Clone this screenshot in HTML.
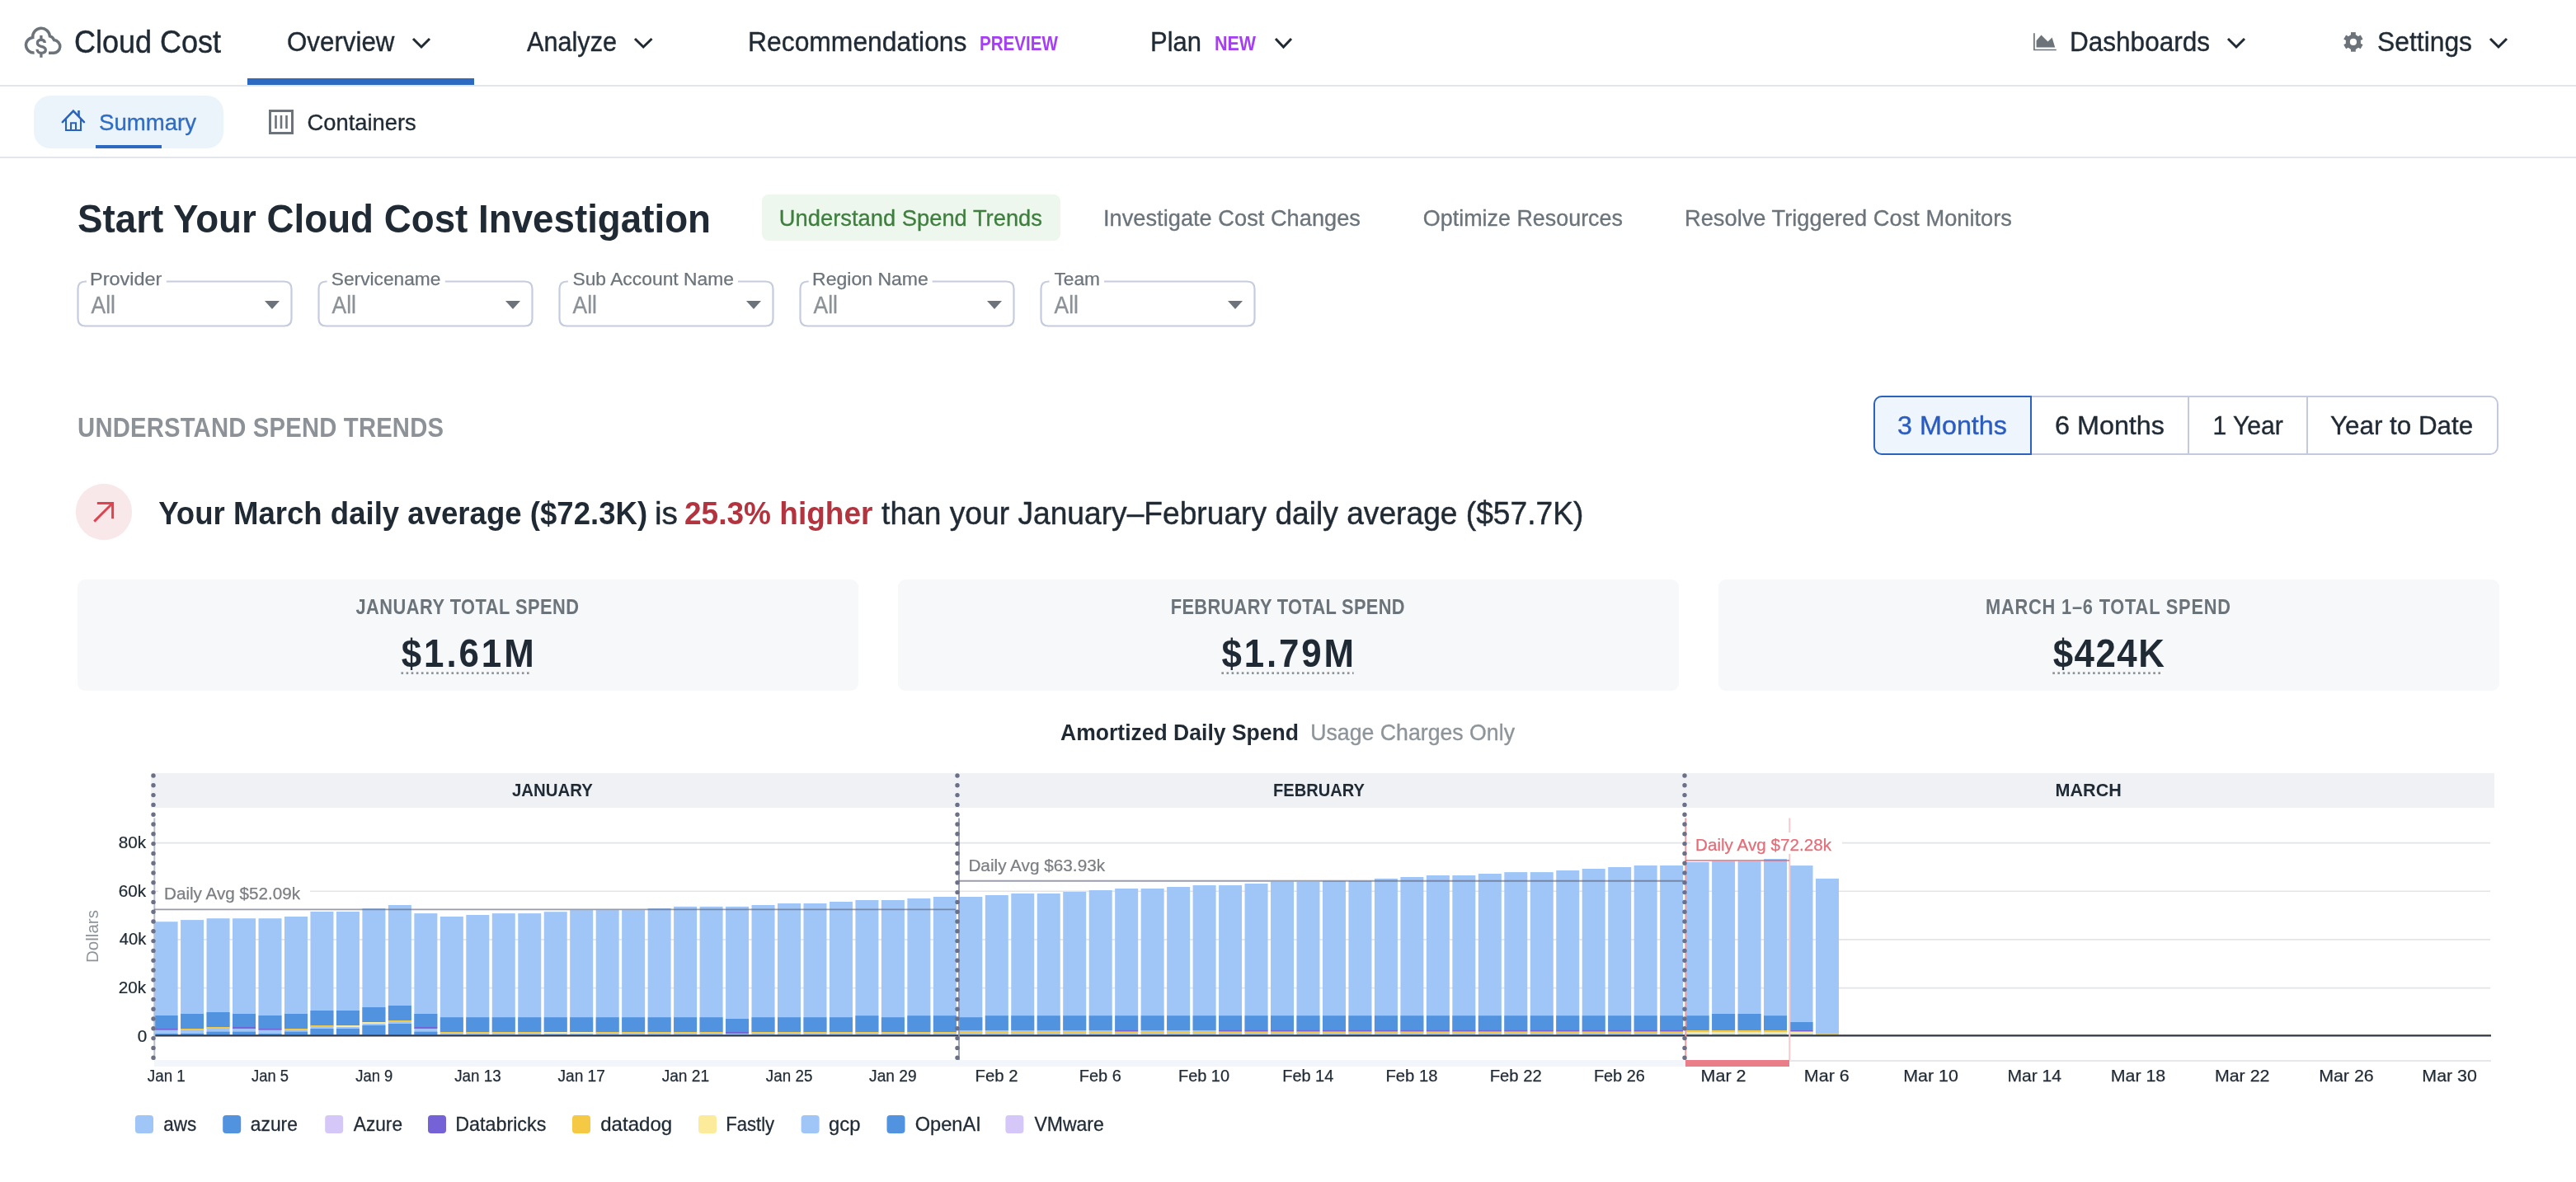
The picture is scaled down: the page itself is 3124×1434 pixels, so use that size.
<!DOCTYPE html>
<html><head><meta charset="utf-8"><title>Cloud Cost</title>
<style>
html,body{margin:0;padding:0;background:#fff;}
body{width:3124px;height:1434px;position:relative;overflow:hidden;font-family:"Liberation Sans", sans-serif;}
svg{position:absolute;left:0;top:0;will-change:transform;}
text{font-family:"Liberation Sans", sans-serif;}
</style></head><body>
<div style="position:absolute;left:0px;top:103px;width:3124px;height:2px;background:#e2e6ec"></div>
<div style="position:absolute;left:300px;top:95px;width:275px;height:8px;background:#2d69c0"></div>
<div style="position:absolute;left:0px;top:190px;width:3124px;height:2px;background:#e2e6ec"></div>
<div style="position:absolute;left:41px;top:116px;width:230px;height:64px;background:#ecf4fb;border-radius:20px"></div>
<div style="position:absolute;left:116px;top:176px;width:80px;height:4px;background:#2d69c0"></div>
<div style="position:absolute;left:924px;top:236px;width:362px;height:56px;background:#edf7ee;border-radius:8px"></div>
<div style="position:absolute;left:2272px;top:480px;width:758px;height:72px;border:2px solid #c3c9df;border-radius:10px;box-sizing:border-box"></div>
<div style="position:absolute;left:2272px;top:480px;width:192px;height:72px;border:2.5px solid #2a62be;border-radius:10px 0 0 10px;background:#eef5fc;box-sizing:border-box"></div>
<div style="position:absolute;left:2653px;top:482px;width:2px;height:68px;background:#c3c9df"></div>
<div style="position:absolute;left:2797px;top:482px;width:2px;height:68px;background:#c3c9df"></div>
<div style="position:absolute;left:94px;top:703px;width:947px;height:135px;background:#f7f8fa;border-radius:9px"></div>
<div style="position:absolute;left:1089px;top:703px;width:947px;height:135px;background:#f7f8fa;border-radius:9px"></div>
<div style="position:absolute;left:2084px;top:703px;width:947px;height:135px;background:#f7f8fa;border-radius:9px"></div>
<svg width="3124" height="1434" viewBox="0 0 3124 1434">
<g fill="none" stroke="#6c737a" stroke-width="3.5"><path d="M41.6,64 A9.3,9.3 0 0,1 39.7,45.5 A10.2,10.2 0 0,1 60.4,43.9 A8,8 0 0,1 65.6,48.6 A7.8,7.8 0 0,1 64.3,64.2 L59,64.2"/></g>
<g fill="none" stroke="#6c737a" stroke-width="3.3"><path d="M54.3,52 C54.3,49.6 52.3,48.4 49.9,48.4 C47.2,48.4 45.4,49.9 45.4,52.3 C45.4,54.8 47.6,55.8 50,56.3 C53,56.9 55.3,58 55.3,60.6 C55.3,63 53.2,64.4 50.2,64.4 C47,64.4 45,62.5 45,59.7"/><line x1="49.9" y1="42.9" x2="49.9" y2="48.4"/><line x1="49.9" y1="64.4" x2="49.9" y2="69.8"/></g>
<text x="90.10" y="63.9" font-size="38.0" fill="#1f2a35" font-weight="normal" stroke="#1f2a35" stroke-width="0.46" textLength="177.90" lengthAdjust="spacingAndGlyphs">Cloud Cost</text>
<text x="348.00" y="62.4" font-size="32.8" fill="#1f2a35" font-weight="normal" stroke="#1f2a35" stroke-width="0.39" textLength="130.40" lengthAdjust="spacingAndGlyphs">Overview</text>
<polyline points="501.0,47.0 511.0,57.0 521.0,47.0" fill="none" stroke="#1f2a35" stroke-width="3" stroke-linecap="butt" stroke-linejoin="miter"/>
<text x="639.00" y="62.4" font-size="32.8" fill="#1f2a35" font-weight="normal" stroke="#1f2a35" stroke-width="0.39" textLength="109.00" lengthAdjust="spacingAndGlyphs">Analyze</text>
<polyline points="770.0,47.0 780.2,57.0 790.5,47.0" fill="none" stroke="#1f2a35" stroke-width="3" stroke-linecap="butt" stroke-linejoin="miter"/>
<text x="907.00" y="62.4" font-size="32.8" fill="#1f2a35" font-weight="normal" stroke="#1f2a35" stroke-width="0.39" textLength="265.50" lengthAdjust="spacingAndGlyphs">Recommendations</text>
<text x="1188.00" y="60.5" font-size="24.2" fill="#a43ff2" font-weight="bold" textLength="95.00" lengthAdjust="spacingAndGlyphs">PREVIEW</text>
<text x="1395.00" y="62.4" font-size="32.8" fill="#1f2a35" font-weight="normal" stroke="#1f2a35" stroke-width="0.39" textLength="62.00" lengthAdjust="spacingAndGlyphs">Plan</text>
<text x="1473.00" y="60.5" font-size="24.2" fill="#a43ff2" font-weight="bold" textLength="50.00" lengthAdjust="spacingAndGlyphs">NEW</text>
<polyline points="1547.0,47.0 1556.5,57.0 1566.0,47.0" fill="none" stroke="#1f2a35" stroke-width="3" stroke-linecap="butt" stroke-linejoin="miter"/>
<path d="M2466.9,40.3 L2466.9,60.5 L2493.8,60.5" fill="none" stroke="#6c737a" stroke-width="1.7"/>
<path d="M2469.6,57.6 L2469.6,49.2 L2475.5,42.6 L2483.5,50.5 L2488.6,45.6 L2492.2,57.6 Z" fill="#6c737a"/>
<text x="2510.00" y="62.4" font-size="32.8" fill="#1f2a35" font-weight="normal" stroke="#1f2a35" stroke-width="0.39" textLength="170.00" lengthAdjust="spacingAndGlyphs">Dashboards</text>
<polyline points="2702.0,47.0 2712.0,57.0 2722.0,47.0" fill="none" stroke="#1f2a35" stroke-width="3" stroke-linecap="butt" stroke-linejoin="miter"/>
<g fill="#6c737a"><circle cx="2853.9" cy="50.9" r="9.2"/><rect x="2851.00" y="39.10" width="5.8" height="6" transform="rotate(120,2853.9,50.9)"/><rect x="2851.00" y="39.10" width="5.8" height="6" transform="rotate(180,2853.9,50.9)"/><rect x="2851.00" y="39.10" width="5.8" height="6" transform="rotate(240,2853.9,50.9)"/><rect x="2851.00" y="39.10" width="5.8" height="6" transform="rotate(300,2853.9,50.9)"/><rect x="2851.00" y="39.10" width="5.8" height="6" transform="rotate(360,2853.9,50.9)"/><rect x="2851.00" y="39.10" width="5.8" height="6" transform="rotate(420,2853.9,50.9)"/></g><circle cx="2853.9" cy="50.9" r="4.1" fill="#ffffff"/>
<text x="2883.10" y="62.4" font-size="32.8" fill="#1f2a35" font-weight="normal" stroke="#1f2a35" stroke-width="0.39" textLength="114.90" lengthAdjust="spacingAndGlyphs">Settings</text>
<polyline points="3020.0,47.0 3030.0,57.0 3040.0,47.0" fill="none" stroke="#1f2a35" stroke-width="3" stroke-linecap="butt" stroke-linejoin="miter"/>
<g fill="none" stroke="#2a63bd" stroke-width="2.5" stroke-linecap="round"><path d="M75.8,148.2 L88.9,134.6 L102,148.2"/></g><g fill="none" stroke="#2a63bd" stroke-width="2.1"><path d="M80,143.5 L80,158 L98,158 L98,143.5"/><path d="M86,158 L86,149.3 L92,149.3 L92,158"/></g><path d="M94.2,134 L96.8,134 L96.8,142.5 L94.2,140 Z" fill="#2a63bd"/>
<text x="120.00" y="157.8" font-size="27.5" fill="#2f6cc3" font-weight="normal" stroke="#2f6cc3" stroke-width="0.33" textLength="118.10" lengthAdjust="spacingAndGlyphs">Summary</text>
<rect x="327.5" y="134.5" width="27" height="27" fill="none" stroke="#6c737a" stroke-width="3"/>
<line x1="334.5" y1="140" x2="334.5" y2="156" stroke="#6c737a" stroke-width="2.6"/>
<line x1="341" y1="140" x2="341" y2="156" stroke="#6c737a" stroke-width="2.6"/>
<line x1="347.5" y1="140" x2="347.5" y2="156" stroke="#6c737a" stroke-width="2.6"/>
<text x="372.50" y="157.8" font-size="27.5" fill="#1f2a35" font-weight="normal" stroke="#1f2a35" stroke-width="0.33" textLength="132.30" lengthAdjust="spacingAndGlyphs">Containers</text>
<text x="94.00" y="282.0" font-size="48.4" fill="#1f2a35" font-weight="bold" textLength="768.00" lengthAdjust="spacingAndGlyphs">Start Your Cloud Cost Investigation</text>
<text x="944.80" y="274.0" font-size="27.5" fill="#3e7f3e" font-weight="normal" stroke="#3e7f3e" stroke-width="0.33" textLength="319.20" lengthAdjust="spacingAndGlyphs">Understand Spend Trends</text>
<text x="1338.00" y="274.0" font-size="27.5" fill="#6b747b" font-weight="normal" stroke="#6b747b" stroke-width="0.33" textLength="312.00" lengthAdjust="spacingAndGlyphs">Investigate Cost Changes</text>
<text x="1725.80" y="274.0" font-size="27.5" fill="#6b747b" font-weight="normal" stroke="#6b747b" stroke-width="0.33" textLength="242.20" lengthAdjust="spacingAndGlyphs">Optimize Resources</text>
<text x="2043.00" y="274.0" font-size="27.5" fill="#6b747b" font-weight="normal" stroke="#6b747b" stroke-width="0.33" textLength="397.00" lengthAdjust="spacingAndGlyphs">Resolve Triggered Cost Monitors</text>
<path d="M105.0,341.5 L103.5,341.5 Q94.5,341.5 94.5,350.5 L94.5,386.5 Q94.5,395.5 103.5,395.5 L344.5,395.5 Q353.5,395.5 353.5,386.5 L353.5,350.5 Q353.5,341.5 344.5,341.5 L201.8,341.5" fill="none" stroke="#c5cbe0" stroke-width="2.2"/>
<text x="109.00" y="346.4" font-size="21.2" fill="#6b737b" font-weight="normal" stroke="#6b737b" stroke-width="0.25" textLength="87.40" lengthAdjust="spacingAndGlyphs">Provider</text>
<text x="110.50" y="380.2" font-size="28.7" fill="#8b9197" font-weight="normal" stroke="#8b9197" stroke-width="0.34" textLength="29.40" lengthAdjust="spacingAndGlyphs">All</text>
<path d="M321.0,365 L339.0,365 L330.0,375 Z" fill="#6c737a"/>
<path d="M396.6,341.5 L395.5,341.5 Q386.5,341.5 386.5,350.5 L386.5,386.5 Q386.5,395.5 395.5,395.5 L636.5,395.5 Q645.5,395.5 645.5,386.5 L645.5,350.5 Q645.5,341.5 636.5,341.5 L539.8,341.5" fill="none" stroke="#c5cbe0" stroke-width="2.2"/>
<text x="401.80" y="346.4" font-size="21.2" fill="#6b737b" font-weight="normal" stroke="#6b737b" stroke-width="0.25" textLength="132.60" lengthAdjust="spacingAndGlyphs">Servicename</text>
<text x="402.50" y="380.2" font-size="28.7" fill="#8b9197" font-weight="normal" stroke="#8b9197" stroke-width="0.34" textLength="29.40" lengthAdjust="spacingAndGlyphs">All</text>
<path d="M613.0,365 L631.0,365 L622.0,375 Z" fill="#6c737a"/>
<path d="M688.8,341.5 L687.5,341.5 Q678.5,341.5 678.5,350.5 L678.5,386.5 Q678.5,395.5 687.5,395.5 L928.5,395.5 Q937.5,395.5 937.5,386.5 L937.5,350.5 Q937.5,341.5 928.5,341.5 L895.0,341.5" fill="none" stroke="#c5cbe0" stroke-width="2.2"/>
<text x="694.40" y="346.4" font-size="21.2" fill="#6b737b" font-weight="normal" stroke="#6b737b" stroke-width="0.25" textLength="195.60" lengthAdjust="spacingAndGlyphs">Sub Account Name</text>
<text x="694.50" y="380.2" font-size="28.7" fill="#8b9197" font-weight="normal" stroke="#8b9197" stroke-width="0.34" textLength="29.40" lengthAdjust="spacingAndGlyphs">All</text>
<path d="M905.0,365 L923.0,365 L914.0,375 Z" fill="#6c737a"/>
<path d="M980.7,341.5 L979.5,341.5 Q970.5,341.5 970.5,350.5 L970.5,386.5 Q970.5,395.5 979.5,395.5 L1220.5,395.5 Q1229.5,395.5 1229.5,386.5 L1229.5,350.5 Q1229.5,341.5 1220.5,341.5 L1130.6,341.5" fill="none" stroke="#c5cbe0" stroke-width="2.2"/>
<text x="985.10" y="346.4" font-size="21.2" fill="#6b737b" font-weight="normal" stroke="#6b737b" stroke-width="0.25" textLength="140.70" lengthAdjust="spacingAndGlyphs">Region Name</text>
<text x="986.50" y="380.2" font-size="28.7" fill="#8b9197" font-weight="normal" stroke="#8b9197" stroke-width="0.34" textLength="29.40" lengthAdjust="spacingAndGlyphs">All</text>
<path d="M1197.0,365 L1215.0,365 L1206.0,375 Z" fill="#6c737a"/>
<path d="M1272.5,341.5 L1271.5,341.5 Q1262.5,341.5 1262.5,350.5 L1262.5,386.5 Q1262.5,395.5 1271.5,395.5 L1512.5,395.5 Q1521.5,395.5 1521.5,386.5 L1521.5,350.5 Q1521.5,341.5 1512.5,341.5 L1339.0,341.5" fill="none" stroke="#c5cbe0" stroke-width="2.2"/>
<text x="1278.50" y="346.4" font-size="21.2" fill="#6b737b" font-weight="normal" stroke="#6b737b" stroke-width="0.25" textLength="55.50" lengthAdjust="spacingAndGlyphs">Team</text>
<text x="1278.50" y="380.2" font-size="28.7" fill="#8b9197" font-weight="normal" stroke="#8b9197" stroke-width="0.34" textLength="29.40" lengthAdjust="spacingAndGlyphs">All</text>
<path d="M1489.0,365 L1507.0,365 L1498.0,375 Z" fill="#6c737a"/>
<text transform="scale(0.9,1)" x="104.56" y="530.3" font-size="32.5" fill="#8c9297" font-weight="bold" textLength="493.22" lengthAdjust="spacing">UNDERSTAND SPEND TRENDS</text>
<text x="2301.00" y="526.8" font-size="31.9" fill="#2a5cc0" font-weight="normal" stroke="#2a5cc0" stroke-width="0.38" textLength="133.00" lengthAdjust="spacingAndGlyphs">3 Months</text>
<text x="2492.00" y="526.8" font-size="31.9" fill="#1f2a35" font-weight="normal" stroke="#1f2a35" stroke-width="0.38" textLength="133.00" lengthAdjust="spacingAndGlyphs">6 Months</text>
<text x="2683.40" y="526.8" font-size="31.9" fill="#1f2a35" font-weight="normal" stroke="#1f2a35" stroke-width="0.38" textLength="85.40" lengthAdjust="spacingAndGlyphs">1 Year</text>
<text x="2826.00" y="526.8" font-size="31.9" fill="#1f2a35" font-weight="normal" stroke="#1f2a35" stroke-width="0.38" textLength="173.20" lengthAdjust="spacingAndGlyphs">Year to Date</text>
<circle cx="126" cy="621" r="34.2" fill="#f9e8ea"/>
<g stroke="#db4450" stroke-width="3" fill="none"><line x1="114.3" y1="632.6" x2="136" y2="611"/><polyline points="117.8,610.6 136.6,610.6 136.6,629.2"/></g>
<text x="192.20" y="635.9" font-size="39.6" fill="#1f2a35" font-weight="bold" textLength="592.90" lengthAdjust="spacingAndGlyphs">Your March daily average ($72.3K)</text>
<text x="794.00" y="635.9" font-size="39.6" fill="#1f2a35" font-weight="normal" stroke="#1f2a35" stroke-width="0.47" textLength="28.00" lengthAdjust="spacingAndGlyphs">is</text>
<text x="830.00" y="635.9" font-size="39.6" fill="#b3343f" font-weight="bold" textLength="228.50" lengthAdjust="spacingAndGlyphs">25.3% higher</text>
<text x="1069.10" y="635.9" font-size="39.6" fill="#1f2a35" font-weight="normal" stroke="#1f2a35" stroke-width="0.47" textLength="851.30" lengthAdjust="spacingAndGlyphs">than your January–February daily average ($57.7K)</text>
<text transform="scale(0.86,1)" x="501.74" y="745.2" font-size="25.4" fill="#6b737b" font-weight="bold" textLength="314.53" lengthAdjust="spacing">JANUARY TOTAL SPEND</text>
<text transform="scale(0.9,1)" x="540.89" y="809.3" font-size="48.7" fill="#1f2a35" font-weight="bold" textLength="178.78" lengthAdjust="spacing">$1.61M</text>
<line x1="486.5" y1="816.6" x2="643.7" y2="816.6" stroke="#8d949a" stroke-width="2.6" stroke-dasharray="2.6,3.5"/>
<text transform="scale(0.86,1)" x="1650.93" y="745.2" font-size="25.4" fill="#6b737b" font-weight="bold" textLength="330.00" lengthAdjust="spacing">FEBRUARY TOTAL SPEND</text>
<text transform="scale(0.9,1)" x="1646.22" y="809.3" font-size="48.7" fill="#1f2a35" font-weight="bold" textLength="178.33" lengthAdjust="spacing">$1.79M</text>
<line x1="1481.4" y1="816.6" x2="1641.6" y2="816.6" stroke="#8d949a" stroke-width="2.6" stroke-dasharray="2.6,3.5"/>
<text transform="scale(0.86,1)" x="2800.00" y="745.2" font-size="25.4" fill="#6b737b" font-weight="bold" textLength="345.47" lengthAdjust="spacing">MARCH 1–6 TOTAL SPEND</text>
<text transform="scale(0.9,1)" x="2766.33" y="809.3" font-size="48.7" fill="#1f2a35" font-weight="bold" textLength="150.22" lengthAdjust="spacing">$424K</text>
<line x1="2489.3" y1="816.6" x2="2620.6" y2="816.6" stroke="#8d949a" stroke-width="2.6" stroke-dasharray="2.6,3.5"/>
<text x="1286.00" y="897.8" font-size="28.0" fill="#1f2a35" font-weight="bold" textLength="289.00" lengthAdjust="spacingAndGlyphs">Amortized Daily Spend</text>
<text x="1589.20" y="897.8" font-size="28.0" fill="#8d949a" font-weight="normal" stroke="#8d949a" stroke-width="0.34" textLength="247.80" lengthAdjust="spacingAndGlyphs">Usage Charges Only</text>
<rect x="183.00" y="938.00" width="2842.00" height="42.00" rx="0" fill="#eff1f5" />
<text x="621.00" y="965.8" font-size="22.9" fill="#1f2a35" font-weight="bold" textLength="98.00" lengthAdjust="spacingAndGlyphs">JANUARY</text>
<text x="1544.00" y="965.8" font-size="22.9" fill="#1f2a35" font-weight="bold" textLength="111.00" lengthAdjust="spacingAndGlyphs">FEBRUARY</text>
<text x="2492.60" y="965.8" font-size="22.9" fill="#1f2a35" font-weight="bold" textLength="80.20" lengthAdjust="spacingAndGlyphs">MARCH</text>
<line x1="187.00" y1="1198.55" x2="3020.00" y2="1198.55" stroke="#e3e4e6" stroke-width="1.7" />
<line x1="187.00" y1="1139.90" x2="3020.00" y2="1139.90" stroke="#e3e4e6" stroke-width="1.7" />
<line x1="187.00" y1="1081.25" x2="3020.00" y2="1081.25" stroke="#e3e4e6" stroke-width="1.7" />
<line x1="187.00" y1="1022.60" x2="3020.00" y2="1022.60" stroke="#e3e4e6" stroke-width="1.7" />
<rect x="187.00" y="1286.00" width="1857.00" height="8.00" rx="0" fill="#f2f6fa" />
<line x1="2170.00" y1="1287.00" x2="3021.00" y2="1287.00" stroke="#e6e7ea" stroke-width="2" />
<rect x="2044.00" y="1286.00" width="126.00" height="8.00" rx="0" fill="#e97d88" />
<text x="166.70" y="1263.5" font-size="19.7" fill="#1f2a35" font-weight="normal" stroke="#1f2a35" stroke-width="0.24" textLength="11.50" lengthAdjust="spacingAndGlyphs">0</text>
<text x="143.80" y="1204.9" font-size="19.7" fill="#1f2a35" font-weight="normal" stroke="#1f2a35" stroke-width="0.24" textLength="33.40" lengthAdjust="spacingAndGlyphs">20k</text>
<text x="144.80" y="1146.3" font-size="19.7" fill="#1f2a35" font-weight="normal" stroke="#1f2a35" stroke-width="0.24" textLength="32.40" lengthAdjust="spacingAndGlyphs">40k</text>
<text x="143.80" y="1087.7" font-size="19.7" fill="#1f2a35" font-weight="normal" stroke="#1f2a35" stroke-width="0.24" textLength="33.40" lengthAdjust="spacingAndGlyphs">60k</text>
<text x="143.80" y="1029.1" font-size="19.7" fill="#1f2a35" font-weight="normal" stroke="#1f2a35" stroke-width="0.24" textLength="33.40" lengthAdjust="spacingAndGlyphs">80k</text>
<text transform="translate(119.3,1136) rotate(-90)" text-anchor="middle" font-size="21" fill="#8d949a" textLength="64" lengthAdjust="spacingAndGlyphs">Dollars</text>
<rect x="187.60" y="1118.20" width="28.00" height="137.10" rx="0" fill="#a0c6f7" />
<rect x="187.60" y="1232.00" width="28.00" height="16.00" rx="0" fill="#5293e0" />
<rect x="187.60" y="1248.00" width="28.00" height="1.60" rx="0" fill="#7462d6" />
<rect x="187.60" y="1254.10" width="28.00" height="1.20" rx="0" fill="#5293e0" />
<rect x="219.07" y="1116.10" width="28.00" height="139.20" rx="0" fill="#a0c6f7" />
<rect x="219.07" y="1230.00" width="28.00" height="18.00" rx="0" fill="#5293e0" />
<rect x="219.07" y="1248.00" width="28.00" height="2.00" rx="0" fill="#f6c944" />
<rect x="219.07" y="1253.90" width="28.00" height="1.40" rx="0" fill="#5293e0" />
<rect x="250.55" y="1114.20" width="28.00" height="141.10" rx="0" fill="#a0c6f7" />
<rect x="250.55" y="1228.00" width="28.00" height="18.00" rx="0" fill="#5293e0" />
<rect x="250.55" y="1246.00" width="28.00" height="2.00" rx="0" fill="#f6c944" />
<rect x="250.55" y="1251.70" width="28.00" height="3.60" rx="0" fill="#5293e0" />
<rect x="282.02" y="1114.20" width="28.00" height="141.10" rx="0" fill="#a0c6f7" />
<rect x="282.02" y="1230.00" width="28.00" height="16.00" rx="0" fill="#5293e0" />
<rect x="282.02" y="1246.00" width="28.00" height="1.90" rx="0" fill="#7462d6" />
<rect x="282.02" y="1251.70" width="28.00" height="3.60" rx="0" fill="#5293e0" />
<rect x="313.50" y="1114.20" width="28.00" height="141.10" rx="0" fill="#a0c6f7" />
<rect x="313.50" y="1232.00" width="28.00" height="16.00" rx="0" fill="#5293e0" />
<rect x="313.50" y="1248.00" width="28.00" height="1.60" rx="0" fill="#7462d6" />
<rect x="313.50" y="1254.10" width="28.00" height="1.20" rx="0" fill="#5293e0" />
<rect x="344.98" y="1112.00" width="28.00" height="143.30" rx="0" fill="#a0c6f7" />
<rect x="344.98" y="1230.00" width="28.00" height="18.00" rx="0" fill="#5293e0" />
<rect x="344.98" y="1248.00" width="28.00" height="2.00" rx="0" fill="#f6c944" />
<rect x="344.98" y="1251.70" width="28.00" height="3.60" rx="0" fill="#5293e0" />
<rect x="376.45" y="1106.00" width="28.00" height="149.30" rx="0" fill="#a0c6f7" />
<rect x="376.45" y="1226.00" width="28.00" height="18.00" rx="0" fill="#5293e0" />
<rect x="376.45" y="1244.00" width="28.00" height="2.00" rx="0" fill="#f6c944" />
<rect x="376.45" y="1248.00" width="28.00" height="7.30" rx="0" fill="#5293e0" />
<rect x="407.93" y="1106.00" width="28.00" height="149.30" rx="0" fill="#a0c6f7" />
<rect x="407.93" y="1226.00" width="28.00" height="18.00" rx="0" fill="#5293e0" />
<rect x="407.93" y="1244.00" width="28.00" height="2.00" rx="0" fill="#fdeb9c" />
<rect x="407.93" y="1248.00" width="28.00" height="7.30" rx="0" fill="#5293e0" />
<rect x="439.40" y="1102.10" width="28.00" height="153.20" rx="0" fill="#a0c6f7" />
<rect x="439.40" y="1222.00" width="28.00" height="18.00" rx="0" fill="#5293e0" />
<rect x="439.40" y="1240.00" width="28.00" height="2.00" rx="0" fill="#fdeb9c" />
<rect x="439.40" y="1244.00" width="28.00" height="11.30" rx="0" fill="#5293e0" />
<rect x="470.88" y="1098.00" width="28.00" height="157.30" rx="0" fill="#a0c6f7" />
<rect x="470.88" y="1220.00" width="28.00" height="18.00" rx="0" fill="#5293e0" />
<rect x="470.88" y="1238.00" width="28.00" height="2.00" rx="0" fill="#f6c944" />
<rect x="470.88" y="1242.00" width="28.00" height="13.30" rx="0" fill="#5293e0" />
<rect x="502.35" y="1108.10" width="28.00" height="147.20" rx="0" fill="#a0c6f7" />
<rect x="502.35" y="1230.00" width="28.00" height="16.00" rx="0" fill="#5293e0" />
<rect x="502.35" y="1246.00" width="28.00" height="1.90" rx="0" fill="#7462d6" />
<rect x="502.35" y="1251.70" width="28.00" height="3.60" rx="0" fill="#5293e0" />
<rect x="533.83" y="1112.00" width="28.00" height="143.30" rx="0" fill="#a0c6f7" />
<rect x="533.83" y="1234.20" width="28.00" height="17.80" rx="0" fill="#5293e0" />
<rect x="533.83" y="1252.00" width="28.00" height="1.90" rx="0" fill="#f6c944" />
<rect x="565.30" y="1110.00" width="28.00" height="145.30" rx="0" fill="#a0c6f7" />
<rect x="565.30" y="1234.20" width="28.00" height="17.80" rx="0" fill="#5293e0" />
<rect x="565.30" y="1252.00" width="28.00" height="1.90" rx="0" fill="#f6c944" />
<rect x="596.77" y="1108.10" width="28.00" height="147.20" rx="0" fill="#a0c6f7" />
<rect x="596.77" y="1234.20" width="28.00" height="17.80" rx="0" fill="#5293e0" />
<rect x="596.77" y="1252.00" width="28.00" height="1.90" rx="0" fill="#f6c944" />
<rect x="628.25" y="1108.10" width="28.00" height="147.20" rx="0" fill="#a0c6f7" />
<rect x="628.25" y="1234.20" width="28.00" height="17.80" rx="0" fill="#5293e0" />
<rect x="628.25" y="1252.00" width="28.00" height="1.90" rx="0" fill="#f6c944" />
<rect x="659.73" y="1106.20" width="28.00" height="149.10" rx="0" fill="#a0c6f7" />
<rect x="659.73" y="1234.20" width="28.00" height="17.80" rx="0" fill="#5293e0" />
<rect x="659.73" y="1252.00" width="28.00" height="1.90" rx="0" fill="#fdeb9c" />
<rect x="691.20" y="1104.20" width="28.00" height="151.10" rx="0" fill="#a0c6f7" />
<rect x="691.20" y="1234.20" width="28.00" height="17.80" rx="0" fill="#5293e0" />
<rect x="691.20" y="1252.00" width="28.00" height="1.90" rx="0" fill="#fdeb9c" />
<rect x="722.68" y="1104.20" width="28.00" height="151.10" rx="0" fill="#a0c6f7" />
<rect x="722.68" y="1234.20" width="28.00" height="17.80" rx="0" fill="#5293e0" />
<rect x="722.68" y="1252.00" width="28.00" height="1.90" rx="0" fill="#f6c944" />
<rect x="754.15" y="1104.20" width="28.00" height="151.10" rx="0" fill="#a0c6f7" />
<rect x="754.15" y="1234.20" width="28.00" height="17.80" rx="0" fill="#5293e0" />
<rect x="754.15" y="1252.00" width="28.00" height="1.90" rx="0" fill="#f6c944" />
<rect x="785.62" y="1101.90" width="28.00" height="153.40" rx="0" fill="#a0c6f7" />
<rect x="785.62" y="1234.20" width="28.00" height="17.80" rx="0" fill="#5293e0" />
<rect x="785.62" y="1252.00" width="28.00" height="1.90" rx="0" fill="#f6c944" />
<rect x="817.10" y="1099.90" width="28.00" height="155.40" rx="0" fill="#a0c6f7" />
<rect x="817.10" y="1234.20" width="28.00" height="17.80" rx="0" fill="#5293e0" />
<rect x="817.10" y="1252.00" width="28.00" height="1.90" rx="0" fill="#f6c944" />
<rect x="848.58" y="1099.90" width="28.00" height="155.40" rx="0" fill="#a0c6f7" />
<rect x="848.58" y="1234.20" width="28.00" height="17.80" rx="0" fill="#5293e0" />
<rect x="848.58" y="1252.00" width="28.00" height="1.90" rx="0" fill="#f6c944" />
<rect x="880.05" y="1099.90" width="28.00" height="155.40" rx="0" fill="#a0c6f7" />
<rect x="880.05" y="1236.00" width="28.00" height="16.00" rx="0" fill="#5293e0" />
<rect x="880.05" y="1252.00" width="28.00" height="1.90" rx="0" fill="#7462d6" />
<rect x="911.53" y="1098.00" width="28.00" height="157.30" rx="0" fill="#a0c6f7" />
<rect x="911.53" y="1234.20" width="28.00" height="17.80" rx="0" fill="#5293e0" />
<rect x="911.53" y="1252.00" width="28.00" height="1.90" rx="0" fill="#f6c944" />
<rect x="943.00" y="1096.00" width="28.00" height="159.30" rx="0" fill="#a0c6f7" />
<rect x="943.00" y="1234.20" width="28.00" height="17.80" rx="0" fill="#5293e0" />
<rect x="943.00" y="1252.00" width="28.00" height="1.90" rx="0" fill="#f6c944" />
<rect x="974.48" y="1096.00" width="28.00" height="159.30" rx="0" fill="#a0c6f7" />
<rect x="974.48" y="1234.20" width="28.00" height="17.80" rx="0" fill="#5293e0" />
<rect x="974.48" y="1252.00" width="28.00" height="1.90" rx="0" fill="#f6c944" />
<rect x="1005.95" y="1094.00" width="28.00" height="161.30" rx="0" fill="#a0c6f7" />
<rect x="1005.95" y="1234.20" width="28.00" height="17.80" rx="0" fill="#5293e0" />
<rect x="1005.95" y="1252.00" width="28.00" height="1.90" rx="0" fill="#f6c944" />
<rect x="1037.42" y="1092.00" width="28.00" height="163.30" rx="0" fill="#a0c6f7" />
<rect x="1037.42" y="1232.20" width="28.00" height="19.80" rx="0" fill="#5293e0" />
<rect x="1037.42" y="1252.00" width="28.00" height="1.90" rx="0" fill="#f6c944" />
<rect x="1068.90" y="1092.00" width="28.00" height="163.30" rx="0" fill="#a0c6f7" />
<rect x="1068.90" y="1234.20" width="28.00" height="17.80" rx="0" fill="#5293e0" />
<rect x="1068.90" y="1252.00" width="28.00" height="1.90" rx="0" fill="#f6c944" />
<rect x="1100.38" y="1090.00" width="28.00" height="165.30" rx="0" fill="#a0c6f7" />
<rect x="1100.38" y="1232.20" width="28.00" height="19.80" rx="0" fill="#5293e0" />
<rect x="1100.38" y="1252.00" width="28.00" height="1.90" rx="0" fill="#f6c944" />
<rect x="1131.85" y="1088.00" width="28.00" height="167.30" rx="0" fill="#a0c6f7" />
<rect x="1131.85" y="1232.20" width="28.00" height="19.80" rx="0" fill="#5293e0" />
<rect x="1131.85" y="1252.00" width="28.00" height="1.90" rx="0" fill="#f6c944" />
<rect x="1163.33" y="1088.00" width="28.00" height="167.30" rx="0" fill="#a0c6f7" />
<rect x="1163.33" y="1234.20" width="28.00" height="15.80" rx="0" fill="#5293e0" />
<rect x="1163.33" y="1251.60" width="28.00" height="2.20" rx="0" fill="#f6c944" />
<rect x="1194.80" y="1086.00" width="28.00" height="169.30" rx="0" fill="#a0c6f7" />
<rect x="1194.80" y="1232.20" width="28.00" height="17.80" rx="0" fill="#5293e0" />
<rect x="1194.80" y="1251.60" width="28.00" height="2.20" rx="0" fill="#f6c944" />
<rect x="1226.27" y="1084.00" width="28.00" height="171.30" rx="0" fill="#a0c6f7" />
<rect x="1226.27" y="1232.20" width="28.00" height="17.80" rx="0" fill="#5293e0" />
<rect x="1226.27" y="1251.60" width="28.00" height="2.20" rx="0" fill="#f6c944" />
<rect x="1257.75" y="1084.00" width="28.00" height="171.30" rx="0" fill="#a0c6f7" />
<rect x="1257.75" y="1232.20" width="28.00" height="17.80" rx="0" fill="#5293e0" />
<rect x="1257.75" y="1251.60" width="28.00" height="2.20" rx="0" fill="#f6c944" />
<rect x="1289.22" y="1082.00" width="28.00" height="173.30" rx="0" fill="#a0c6f7" />
<rect x="1289.22" y="1232.20" width="28.00" height="17.80" rx="0" fill="#5293e0" />
<rect x="1289.22" y="1251.60" width="28.00" height="2.20" rx="0" fill="#f6c944" />
<rect x="1320.70" y="1080.00" width="28.00" height="175.30" rx="0" fill="#a0c6f7" />
<rect x="1320.70" y="1232.20" width="28.00" height="17.80" rx="0" fill="#5293e0" />
<rect x="1320.70" y="1251.60" width="28.00" height="2.20" rx="0" fill="#f6c944" />
<rect x="1352.17" y="1078.00" width="28.00" height="177.30" rx="0" fill="#a0c6f7" />
<rect x="1352.17" y="1232.20" width="28.00" height="17.80" rx="0" fill="#5293e0" />
<rect x="1352.17" y="1249.90" width="28.00" height="1.70" rx="0" fill="#7462d6" />
<rect x="1352.17" y="1251.60" width="28.00" height="2.20" rx="0" fill="#f6c944" />
<rect x="1383.65" y="1078.00" width="28.00" height="177.30" rx="0" fill="#a0c6f7" />
<rect x="1383.65" y="1232.20" width="28.00" height="17.80" rx="0" fill="#5293e0" />
<rect x="1383.65" y="1251.60" width="28.00" height="2.20" rx="0" fill="#f6c944" />
<rect x="1415.12" y="1076.00" width="28.00" height="179.30" rx="0" fill="#a0c6f7" />
<rect x="1415.12" y="1232.20" width="28.00" height="17.80" rx="0" fill="#5293e0" />
<rect x="1415.12" y="1251.60" width="28.00" height="2.20" rx="0" fill="#f6c944" />
<rect x="1446.60" y="1074.00" width="28.00" height="181.30" rx="0" fill="#a0c6f7" />
<rect x="1446.60" y="1232.20" width="28.00" height="17.80" rx="0" fill="#5293e0" />
<rect x="1446.60" y="1251.60" width="28.00" height="2.20" rx="0" fill="#f6c944" />
<rect x="1478.08" y="1074.00" width="28.00" height="181.30" rx="0" fill="#a0c6f7" />
<rect x="1478.08" y="1232.20" width="28.00" height="17.80" rx="0" fill="#5293e0" />
<rect x="1478.08" y="1249.90" width="28.00" height="1.70" rx="0" fill="#7462d6" />
<rect x="1478.08" y="1251.60" width="28.00" height="2.20" rx="0" fill="#f6c944" />
<rect x="1509.55" y="1072.00" width="28.00" height="183.30" rx="0" fill="#a0c6f7" />
<rect x="1509.55" y="1232.20" width="28.00" height="17.80" rx="0" fill="#5293e0" />
<rect x="1509.55" y="1249.90" width="28.00" height="1.70" rx="0" fill="#7462d6" />
<rect x="1509.55" y="1251.60" width="28.00" height="2.20" rx="0" fill="#f6c944" />
<rect x="1541.02" y="1069.70" width="28.00" height="185.60" rx="0" fill="#a0c6f7" />
<rect x="1541.02" y="1232.20" width="28.00" height="17.80" rx="0" fill="#5293e0" />
<rect x="1541.02" y="1249.90" width="28.00" height="1.70" rx="0" fill="#7462d6" />
<rect x="1541.02" y="1251.60" width="28.00" height="2.20" rx="0" fill="#f6c944" />
<rect x="1572.50" y="1069.80" width="28.00" height="185.50" rx="0" fill="#a0c6f7" />
<rect x="1572.50" y="1232.20" width="28.00" height="17.80" rx="0" fill="#5293e0" />
<rect x="1572.50" y="1249.90" width="28.00" height="1.70" rx="0" fill="#7462d6" />
<rect x="1572.50" y="1251.60" width="28.00" height="2.20" rx="0" fill="#f6c944" />
<rect x="1603.97" y="1068.80" width="28.00" height="186.50" rx="0" fill="#a0c6f7" />
<rect x="1603.97" y="1232.20" width="28.00" height="17.80" rx="0" fill="#5293e0" />
<rect x="1603.97" y="1249.90" width="28.00" height="1.70" rx="0" fill="#7462d6" />
<rect x="1603.97" y="1251.60" width="28.00" height="2.20" rx="0" fill="#f6c944" />
<rect x="1635.45" y="1068.80" width="28.00" height="186.50" rx="0" fill="#a0c6f7" />
<rect x="1635.45" y="1232.20" width="28.00" height="17.80" rx="0" fill="#5293e0" />
<rect x="1635.45" y="1249.90" width="28.00" height="1.70" rx="0" fill="#7462d6" />
<rect x="1635.45" y="1251.60" width="28.00" height="2.20" rx="0" fill="#f6c944" />
<rect x="1666.92" y="1065.90" width="28.00" height="189.40" rx="0" fill="#a0c6f7" />
<rect x="1666.92" y="1232.20" width="28.00" height="17.80" rx="0" fill="#5293e0" />
<rect x="1666.92" y="1249.90" width="28.00" height="1.70" rx="0" fill="#7462d6" />
<rect x="1666.92" y="1251.60" width="28.00" height="2.20" rx="0" fill="#f6c944" />
<rect x="1698.40" y="1064.00" width="28.00" height="191.30" rx="0" fill="#a0c6f7" />
<rect x="1698.40" y="1232.20" width="28.00" height="17.80" rx="0" fill="#5293e0" />
<rect x="1698.40" y="1249.90" width="28.00" height="1.70" rx="0" fill="#7462d6" />
<rect x="1698.40" y="1251.60" width="28.00" height="2.20" rx="0" fill="#f6c944" />
<rect x="1729.88" y="1062.00" width="28.00" height="193.30" rx="0" fill="#a0c6f7" />
<rect x="1729.88" y="1232.20" width="28.00" height="17.80" rx="0" fill="#5293e0" />
<rect x="1729.88" y="1249.90" width="28.00" height="1.70" rx="0" fill="#7462d6" />
<rect x="1729.88" y="1251.60" width="28.00" height="2.20" rx="0" fill="#f6c944" />
<rect x="1761.35" y="1062.00" width="28.00" height="193.30" rx="0" fill="#a0c6f7" />
<rect x="1761.35" y="1232.20" width="28.00" height="17.80" rx="0" fill="#5293e0" />
<rect x="1761.35" y="1249.90" width="28.00" height="1.70" rx="0" fill="#7462d6" />
<rect x="1761.35" y="1251.60" width="28.00" height="2.20" rx="0" fill="#f6c944" />
<rect x="1792.83" y="1060.00" width="28.00" height="195.30" rx="0" fill="#a0c6f7" />
<rect x="1792.83" y="1232.20" width="28.00" height="17.80" rx="0" fill="#5293e0" />
<rect x="1792.83" y="1249.90" width="28.00" height="1.70" rx="0" fill="#7462d6" />
<rect x="1792.83" y="1251.60" width="28.00" height="2.20" rx="0" fill="#f6c944" />
<rect x="1824.30" y="1058.10" width="28.00" height="197.20" rx="0" fill="#a0c6f7" />
<rect x="1824.30" y="1232.20" width="28.00" height="17.80" rx="0" fill="#5293e0" />
<rect x="1824.30" y="1249.90" width="28.00" height="1.70" rx="0" fill="#7462d6" />
<rect x="1824.30" y="1251.60" width="28.00" height="2.20" rx="0" fill="#f6c944" />
<rect x="1855.78" y="1058.10" width="28.00" height="197.20" rx="0" fill="#a0c6f7" />
<rect x="1855.78" y="1232.20" width="28.00" height="17.80" rx="0" fill="#5293e0" />
<rect x="1855.78" y="1249.90" width="28.00" height="1.70" rx="0" fill="#7462d6" />
<rect x="1855.78" y="1251.60" width="28.00" height="2.20" rx="0" fill="#f6c944" />
<rect x="1887.25" y="1056.00" width="28.00" height="199.30" rx="0" fill="#a0c6f7" />
<rect x="1887.25" y="1232.20" width="28.00" height="17.80" rx="0" fill="#5293e0" />
<rect x="1887.25" y="1249.90" width="28.00" height="1.70" rx="0" fill="#7462d6" />
<rect x="1887.25" y="1251.60" width="28.00" height="2.20" rx="0" fill="#f6c944" />
<rect x="1918.72" y="1054.00" width="28.00" height="201.30" rx="0" fill="#a0c6f7" />
<rect x="1918.72" y="1232.20" width="28.00" height="17.80" rx="0" fill="#5293e0" />
<rect x="1918.72" y="1249.90" width="28.00" height="1.70" rx="0" fill="#7462d6" />
<rect x="1918.72" y="1251.60" width="28.00" height="2.20" rx="0" fill="#f6c944" />
<rect x="1950.20" y="1052.00" width="28.00" height="203.30" rx="0" fill="#a0c6f7" />
<rect x="1950.20" y="1232.20" width="28.00" height="17.80" rx="0" fill="#5293e0" />
<rect x="1950.20" y="1249.90" width="28.00" height="1.70" rx="0" fill="#7462d6" />
<rect x="1950.20" y="1251.60" width="28.00" height="2.20" rx="0" fill="#f6c944" />
<rect x="1981.67" y="1050.00" width="28.00" height="205.30" rx="0" fill="#a0c6f7" />
<rect x="1981.67" y="1232.20" width="28.00" height="17.80" rx="0" fill="#5293e0" />
<rect x="1981.67" y="1249.90" width="28.00" height="1.70" rx="0" fill="#7462d6" />
<rect x="1981.67" y="1251.60" width="28.00" height="2.20" rx="0" fill="#f6c944" />
<rect x="2013.15" y="1050.00" width="28.00" height="205.30" rx="0" fill="#a0c6f7" />
<rect x="2013.15" y="1232.20" width="28.00" height="17.80" rx="0" fill="#5293e0" />
<rect x="2013.15" y="1249.90" width="28.00" height="1.70" rx="0" fill="#7462d6" />
<rect x="2013.15" y="1251.60" width="28.00" height="2.20" rx="0" fill="#f6c944" />
<rect x="2044.62" y="1045.90" width="28.00" height="209.40" rx="0" fill="#a0c6f7" />
<rect x="2044.62" y="1232.20" width="28.00" height="17.80" rx="0" fill="#5293e0" />
<rect x="2044.62" y="1250.00" width="28.00" height="2.20" rx="0" fill="#f6c944" />
<rect x="2044.62" y="1252.20" width="28.00" height="2.20" rx="0" fill="#fdeb9c" />
<rect x="2076.10" y="1044.70" width="28.00" height="210.60" rx="0" fill="#a0c6f7" />
<rect x="2076.10" y="1230.00" width="28.00" height="20.00" rx="0" fill="#5293e0" />
<rect x="2076.10" y="1250.00" width="28.00" height="2.20" rx="0" fill="#f6c944" />
<rect x="2076.10" y="1252.20" width="28.00" height="2.20" rx="0" fill="#fdeb9c" />
<rect x="2107.58" y="1044.70" width="28.00" height="210.60" rx="0" fill="#a0c6f7" />
<rect x="2107.58" y="1230.00" width="28.00" height="20.00" rx="0" fill="#5293e0" />
<rect x="2107.58" y="1250.00" width="28.00" height="2.20" rx="0" fill="#f6c944" />
<rect x="2107.58" y="1252.20" width="28.00" height="2.20" rx="0" fill="#fdeb9c" />
<rect x="2139.05" y="1042.00" width="28.00" height="213.30" rx="0" fill="#a0c6f7" />
<rect x="2139.05" y="1232.20" width="28.00" height="17.80" rx="0" fill="#5293e0" />
<rect x="2139.05" y="1250.00" width="28.00" height="2.20" rx="0" fill="#f6c944" />
<rect x="2139.05" y="1252.20" width="28.00" height="2.20" rx="0" fill="#fdeb9c" />
<rect x="2170.53" y="1050.10" width="28.00" height="205.20" rx="0" fill="#a0c6f7" />
<rect x="2170.53" y="1240.00" width="28.00" height="10.00" rx="0" fill="#5293e0" />
<rect x="2170.53" y="1250.00" width="28.00" height="1.60" rx="0" fill="#7462d6" />
<rect x="2170.53" y="1251.60" width="28.00" height="2.80" rx="0" fill="#fdeb9c" />
<rect x="2202.00" y="1065.90" width="28.00" height="189.40" rx="0" fill="#a0c6f7" />
<rect x="2202.00" y="1253.60" width="28.00" height="1.00" rx="0" fill="#f6c944" />
<line x1="187.00" y1="1256.40" x2="3021.00" y2="1256.40" stroke="#2f3640" stroke-width="2.4" />
<line x1="187.30" y1="992.50" x2="187.30" y2="1286.00" stroke="#b9bfcd" stroke-width="2" />
<line x1="1163.00" y1="992.50" x2="1163.00" y2="1286.00" stroke="#8d93a6" stroke-width="1.7" />
<line x1="2044.30" y1="992.50" x2="2044.30" y2="1286.00" stroke="#e8a0a8" stroke-width="2" />
<line x1="2170.30" y1="992.50" x2="2170.30" y2="1286.00" stroke="#f6c9ce" stroke-width="2" />
<line x1="187.00" y1="1103.40" x2="1159.00" y2="1103.40" stroke="#5a6075" stroke-width="1.9" stroke-opacity="0.62"/>
<line x1="1163.00" y1="1068.80" x2="2043.00" y2="1068.80" stroke="#5a6075" stroke-width="1.9" stroke-opacity="0.62"/>
<line x1="2044.00" y1="1043.90" x2="2170.00" y2="1043.90" stroke="#e05564" stroke-width="1.9" stroke-opacity="0.72"/>
<rect x="192.00" y="1070.00" width="184.00" height="26.00" rx="0" fill="#ffffff" />
<text x="199.00" y="1090.7" font-size="20.7" fill="#7b7e83" font-weight="normal" stroke="#7b7e83" stroke-width="0.25" textLength="165.00" lengthAdjust="spacingAndGlyphs">Daily Avg $52.09k</text>
<text x="1174.40" y="1056.6" font-size="20.3" fill="#7b7e83" font-weight="normal" stroke="#7b7e83" stroke-width="0.24" textLength="165.70" lengthAdjust="spacingAndGlyphs">Daily Avg $63.93k</text>
<rect x="2050.00" y="1010.00" width="184.00" height="26.00" rx="0" fill="#ffffff" />
<text x="2056.00" y="1032.0" font-size="21.0" fill="#e46d78" font-weight="normal" stroke="#e46d78" stroke-width="0.25" textLength="165.00" lengthAdjust="spacingAndGlyphs">Daily Avg $72.28k</text>
<line x1="186" y1="941" x2="186" y2="1284" stroke="#6b7087" stroke-width="5.4" stroke-linecap="round" stroke-dasharray="0,11.8"/>
<line x1="1161" y1="941" x2="1161" y2="1284" stroke="#6b7087" stroke-width="5.4" stroke-linecap="round" stroke-dasharray="0,11.8"/>
<line x1="2043" y1="941" x2="2043" y2="1284" stroke="#6b7087" stroke-width="5.4" stroke-linecap="round" stroke-dasharray="0,11.8"/>
<text x="178.80" y="1312.0" font-size="20.7" fill="#1f2a35" font-weight="normal" stroke="#1f2a35" stroke-width="0.25" textLength="46.00" lengthAdjust="spacingAndGlyphs">Jan 1</text>
<text x="305.02" y="1312.0" font-size="20.7" fill="#1f2a35" font-weight="normal" stroke="#1f2a35" stroke-width="0.25" textLength="45.00" lengthAdjust="spacingAndGlyphs">Jan 5</text>
<text x="431.24" y="1312.0" font-size="20.7" fill="#1f2a35" font-weight="normal" stroke="#1f2a35" stroke-width="0.25" textLength="45.00" lengthAdjust="spacingAndGlyphs">Jan 9</text>
<text x="551.21" y="1312.0" font-size="20.7" fill="#1f2a35" font-weight="normal" stroke="#1f2a35" stroke-width="0.25" textLength="56.50" lengthAdjust="spacingAndGlyphs">Jan 13</text>
<text x="676.43" y="1312.0" font-size="20.7" fill="#1f2a35" font-weight="normal" stroke="#1f2a35" stroke-width="0.25" textLength="57.50" lengthAdjust="spacingAndGlyphs">Jan 17</text>
<text x="802.65" y="1312.0" font-size="20.7" fill="#1f2a35" font-weight="normal" stroke="#1f2a35" stroke-width="0.25" textLength="57.50" lengthAdjust="spacingAndGlyphs">Jan 21</text>
<text x="928.87" y="1312.0" font-size="20.7" fill="#1f2a35" font-weight="normal" stroke="#1f2a35" stroke-width="0.25" textLength="56.50" lengthAdjust="spacingAndGlyphs">Jan 25</text>
<text x="1054.09" y="1312.0" font-size="20.7" fill="#1f2a35" font-weight="normal" stroke="#1f2a35" stroke-width="0.25" textLength="57.50" lengthAdjust="spacingAndGlyphs">Jan 29</text>
<text x="1182.56" y="1312.0" font-size="20.7" fill="#1f2a35" font-weight="normal" stroke="#1f2a35" stroke-width="0.25" textLength="52.00" lengthAdjust="spacingAndGlyphs">Feb 2</text>
<text x="1308.78" y="1312.0" font-size="20.7" fill="#1f2a35" font-weight="normal" stroke="#1f2a35" stroke-width="0.25" textLength="51.00" lengthAdjust="spacingAndGlyphs">Feb 6</text>
<text x="1429.00" y="1312.0" font-size="20.7" fill="#1f2a35" font-weight="normal" stroke="#1f2a35" stroke-width="0.25" textLength="62.00" lengthAdjust="spacingAndGlyphs">Feb 10</text>
<text x="1555.22" y="1312.0" font-size="20.7" fill="#1f2a35" font-weight="normal" stroke="#1f2a35" stroke-width="0.25" textLength="62.00" lengthAdjust="spacingAndGlyphs">Feb 14</text>
<text x="1680.44" y="1312.0" font-size="20.7" fill="#1f2a35" font-weight="normal" stroke="#1f2a35" stroke-width="0.25" textLength="63.00" lengthAdjust="spacingAndGlyphs">Feb 18</text>
<text x="1806.66" y="1312.0" font-size="20.7" fill="#1f2a35" font-weight="normal" stroke="#1f2a35" stroke-width="0.25" textLength="63.00" lengthAdjust="spacingAndGlyphs">Feb 22</text>
<text x="1932.88" y="1312.0" font-size="20.7" fill="#1f2a35" font-weight="normal" stroke="#1f2a35" stroke-width="0.25" textLength="62.00" lengthAdjust="spacingAndGlyphs">Feb 26</text>
<text x="2062.60" y="1312.0" font-size="20.7" fill="#1f2a35" font-weight="normal" stroke="#1f2a35" stroke-width="0.25" textLength="55.00" lengthAdjust="spacingAndGlyphs">Mar 2</text>
<text x="2187.82" y="1312.0" font-size="20.7" fill="#1f2a35" font-weight="normal" stroke="#1f2a35" stroke-width="0.25" textLength="55.00" lengthAdjust="spacingAndGlyphs">Mar 6</text>
<text x="2308.29" y="1312.0" font-size="20.7" fill="#1f2a35" font-weight="normal" stroke="#1f2a35" stroke-width="0.25" textLength="66.50" lengthAdjust="spacingAndGlyphs">Mar 10</text>
<text x="2434.51" y="1312.0" font-size="20.7" fill="#1f2a35" font-weight="normal" stroke="#1f2a35" stroke-width="0.25" textLength="65.50" lengthAdjust="spacingAndGlyphs">Mar 14</text>
<text x="2559.73" y="1312.0" font-size="20.7" fill="#1f2a35" font-weight="normal" stroke="#1f2a35" stroke-width="0.25" textLength="66.50" lengthAdjust="spacingAndGlyphs">Mar 18</text>
<text x="2685.95" y="1312.0" font-size="20.7" fill="#1f2a35" font-weight="normal" stroke="#1f2a35" stroke-width="0.25" textLength="66.50" lengthAdjust="spacingAndGlyphs">Mar 22</text>
<text x="2812.17" y="1312.0" font-size="20.7" fill="#1f2a35" font-weight="normal" stroke="#1f2a35" stroke-width="0.25" textLength="66.50" lengthAdjust="spacingAndGlyphs">Mar 26</text>
<text x="2937.39" y="1312.0" font-size="20.7" fill="#1f2a35" font-weight="normal" stroke="#1f2a35" stroke-width="0.25" textLength="66.50" lengthAdjust="spacingAndGlyphs">Mar 30</text>
<rect x="164.00" y="1353.00" width="22.00" height="22.00" rx="4" fill="#a0c6f7" />
<text x="198.20" y="1372.3" font-size="23.6" fill="#1f2a35" font-weight="normal" stroke="#1f2a35" stroke-width="0.28" textLength="40.00" lengthAdjust="spacingAndGlyphs">aws</text>
<rect x="270.20" y="1353.00" width="22.00" height="22.00" rx="4" fill="#5293e0" />
<text x="303.80" y="1372.3" font-size="23.6" fill="#1f2a35" font-weight="normal" stroke="#1f2a35" stroke-width="0.28" textLength="57.10" lengthAdjust="spacingAndGlyphs">azure</text>
<rect x="394.20" y="1353.00" width="22.00" height="22.00" rx="4" fill="#d5c8f8" />
<text x="428.80" y="1372.3" font-size="23.6" fill="#1f2a35" font-weight="normal" stroke="#1f2a35" stroke-width="0.28" textLength="59.20" lengthAdjust="spacingAndGlyphs">Azure</text>
<rect x="519.00" y="1353.00" width="22.00" height="22.00" rx="4" fill="#7462d6" />
<text x="552.20" y="1372.3" font-size="23.6" fill="#1f2a35" font-weight="normal" stroke="#1f2a35" stroke-width="0.28" textLength="110.10" lengthAdjust="spacingAndGlyphs">Databricks</text>
<rect x="694.00" y="1353.00" width="22.00" height="22.00" rx="4" fill="#f6c944" />
<text x="728.20" y="1372.3" font-size="23.6" fill="#1f2a35" font-weight="normal" stroke="#1f2a35" stroke-width="0.28" textLength="87.00" lengthAdjust="spacingAndGlyphs">datadog</text>
<rect x="847.00" y="1353.00" width="22.00" height="22.00" rx="4" fill="#fdeb9c" />
<text x="880.20" y="1372.3" font-size="23.6" fill="#1f2a35" font-weight="normal" stroke="#1f2a35" stroke-width="0.28" textLength="59.00" lengthAdjust="spacingAndGlyphs">Fastly</text>
<rect x="971.60" y="1353.00" width="22.00" height="22.00" rx="4" fill="#a0c6f7" />
<text x="1005.00" y="1372.3" font-size="23.6" fill="#1f2a35" font-weight="normal" stroke="#1f2a35" stroke-width="0.28" textLength="38.40" lengthAdjust="spacingAndGlyphs">gcp</text>
<rect x="1075.50" y="1353.00" width="22.00" height="22.00" rx="4" fill="#5293e0" />
<text x="1109.70" y="1372.3" font-size="23.6" fill="#1f2a35" font-weight="normal" stroke="#1f2a35" stroke-width="0.28" textLength="80.10" lengthAdjust="spacingAndGlyphs">OpenAI</text>
<rect x="1219.40" y="1353.00" width="22.00" height="22.00" rx="4" fill="#d5c8f8" />
<text x="1254.40" y="1372.3" font-size="23.6" fill="#1f2a35" font-weight="normal" stroke="#1f2a35" stroke-width="0.28" textLength="84.40" lengthAdjust="spacingAndGlyphs">VMware</text>
</svg>
</body></html>
